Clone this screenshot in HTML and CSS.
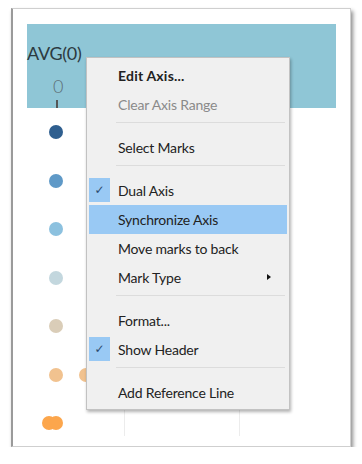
FILE: index.html
```html
<!DOCTYPE html>
<html lang="en">
<head>
    <meta charset="UTF-8">
    <meta name="viewport" content="width=device-width, initial-scale=1.0">
    <title>Axis Menu</title>
    <link rel="stylesheet" href="styles.css">
</head>
<body>
    <div class="card">
        <div class="axis-header">
            <div class="field-name">AVG(0)</div>
            <div class="axis-label">0</div>
            <div class="axis-tick"></div>
        </div>

        <div class="plot">
            <div class="mark-row"><span class="dot c1"></span></div>
            <div class="mark-row"><span class="dot c2"></span></div>
            <div class="mark-row"><span class="dot c3"></span></div>
            <div class="mark-row"><span class="dot c4"></span></div>
            <div class="mark-row"><span class="dot c5"></span></div>
            <div class="mark-row"><span class="dot c6"></span><span class="dot c6 far"></span></div>
            <div class="mark-row"><span class="dot c7"></span><span class="dot c7 pair"></span></div>
        </div>

        <ul class="context-menu">
            <li class="item bold">Edit Axis...</li>
            <li class="item disabled">Clear Axis Range</li>
            <li class="sep"></li>
            <li class="item">Select Marks</li>
            <li class="sep"></li>
            <li class="item checked"><span class="check">&#10003;</span>Dual Axis</li>
            <li class="item active">Synchronize Axis</li>
            <li class="item">Move marks to back</li>
            <li class="item submenu">Mark Type</li>
            <li class="sep"></li>
            <li class="item">Format...</li>
            <li class="item checked"><span class="check">&#10003;</span>Show Header</li>
            <li class="sep"></li>
            <li class="item">Add Reference Line</li>
        </ul>
    </div>
</body>
</html>
```

FILE: styles.css
```css
body {
    margin: 0;
    background: #fff;
    font-family: Lato, "Open Sans", sans-serif;
    color: #222;
}
.card {
    position: relative;
    width: 340px;
    height: 439px;
    margin: 8px 0 0 11px;
    padding: 15px 14px 0 14px;
    box-sizing: border-box;
    background: #fff;
    border: 1px solid #cfcfcf;
    border-left: 2px solid #9a9a9a;
    box-shadow: 2px 3px 4px rgba(0, 0, 0, 0.45);
}
.axis-header {
    height: 84px;
    background: #8fc6d6;
    display: flex;
    flex-direction: column;
}
.field-name {
    font-size: 18px;
    color: #2c3a40;
    padding-top: 18px;
    line-height: 22px;
    letter-spacing: -0.3px;
}
.axis-label {
    margin: 11px 0 0 26px;
    font-size: 18px;
    line-height: 22px;
    color: #5d6f77;
    font-weight: 300;
}
.axis-tick {
    width: 2px;
    height: 8px;
    margin: auto 0 0 29px;
    background: #555;
}
.plot {
    height: 328px;
    background-image:
        linear-gradient(#ececec, #ececec),
        linear-gradient(#ececec, #ececec);
    background-size: 1px 100%, 1px 100%;
    background-position: 97px 0, 212px 0;
    background-repeat: no-repeat;
}
.mark-row {
    height: 48.5px;
    display: flex;
    align-items: center;
    padding-left: 22px;
}
.dot {
    width: 14px;
    height: 14px;
    border-radius: 50%;
    display: inline-block;
}
.dot.pair {
    margin-left: -7px;
}
.dot.far {
    margin-left: 16px;
}
.c1 { background: #2f5f8f; }
.c2 { background: #5f99c7; }
.c3 { background: #8cc1df; }
.c4 { background: #c3d7de; }
.c5 { background: #dacdb8; }
.c6 { background: #f1c28f; }
.c7 { background: #fca64c; }
.mark-row:last-child .dot:first-child {
    margin-left: -7px;
}

.context-menu {
    position: absolute;
    left: 73px;
    top: 48px;
    width: 204px;
    margin: 0;
    padding: 3px 0 2px 0;
    list-style: none;
    background: #f0f0f0;
    border: 1px solid #c2c2c2;
    box-sizing: border-box;
    box-shadow: 1px 2px 3px rgba(0, 0, 0, 0.3);
    font-size: 14px;
    letter-spacing: -0.2px;
}
.item {
    position: relative;
    height: 29px;
    line-height: 29px;
    padding-left: 29px;
    margin: 0 2px;
    white-space: nowrap;
}
.item.bold {
    font-weight: 700;
    letter-spacing: 0.2px;
}
.item.disabled {
    color: #8a8a8a;
}
.item.active {
    background: #99c9f4;
}
.check {
    position: absolute;
    left: 0;
    top: 2px;
    width: 21px;
    height: 24px;
    line-height: 24px;
    text-align: center;
    background: #99c9f4;
    color: #2b4a6e;
    font-size: 12px;
    font-family: "DejaVu Sans", sans-serif;
}
.submenu::after {
    content: "";
    position: absolute;
    right: 16px;
    top: 11px;
    border-left: 4px solid #111;
    border-top: 3.5px solid transparent;
    border-bottom: 3.5px solid transparent;
}
.sep {
    height: 1px;
    margin: 3px 4px 10px 29px;
    background: #dcdcdc;
}
```
